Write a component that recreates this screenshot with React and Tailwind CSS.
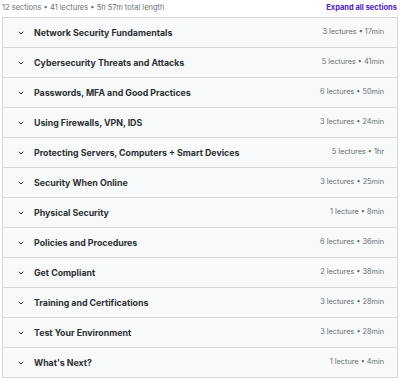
const sections = [
  ["Network Security Fundamentals", "3 lectures • 17min"],
  ["Cybersecurity Threats and Attacks", "5 lectures • 41min"],
  ["Passwords, MFA and Good Practices", "6 lectures • 50min"],
  ["Using Firewalls, VPN, IDS", "3 lectures • 24min"],
  ["Protecting Servers, Computers + Smart Devices", "5 lectures • 1hr"],
  ["Security When Online", "3 lectures • 25min"],
  ["Physical Security", "1 lecture • 8min"],
  ["Policies and Procedures", "6 lectures • 36min"],
  ["Get Compliant", "2 lectures • 38min"],
  ["Training and Certifications", "3 lectures • 28min"],
  ["Test Your Environment", "3 lectures • 28min"],
  ["What's Next?", "1 lecture • 4min"],
];

function Chevron() {
  return (
    <svg width="8" height="8" viewBox="0 0 24 24" fill="none" stroke="#2d2f31" strokeWidth="3" strokeLinecap="round" strokeLinejoin="round">
      <path d="M6 9l6 6 6-6" />
    </svg>
  );
}

export default function App() {
  return (
    <div className="w-[400px] h-[379px] bg-white font-['Inter',sans-serif] text-[#2d2f31] overflow-hidden">
      <div className="flex items-center justify-between px-[2px] h-[15px]">
        <span className="text-[7.5px] text-[#6a6f73]">12 sections • 41 lectures • 5h 57m total length</span>
        <span className="text-[7.5px] font-bold text-[#5022c3] pr-[1px]">Expand all sections</span>
      </div>
      <div className="mx-[2px] mt-[2px] border border-[#d1d7dc]">
        {sections.map(([title, meta], i) => (
          <div
            key={i}
            className={"flex items-center bg-[#f7f9fa] pl-[14px] pr-[13px] " + (i > 0 ? "h-[30px] border-t border-[#d1d7dc]" : "h-[29px]")}
          >
            <Chevron />
            <span className="ml-[9px] text-[8.8px] font-bold flex-1">{title}</span>
            <span className="text-[7.3px] text-[#6a6f73]">{meta}</span>
          </div>
        ))}
      </div>
    </div>
  );
}
